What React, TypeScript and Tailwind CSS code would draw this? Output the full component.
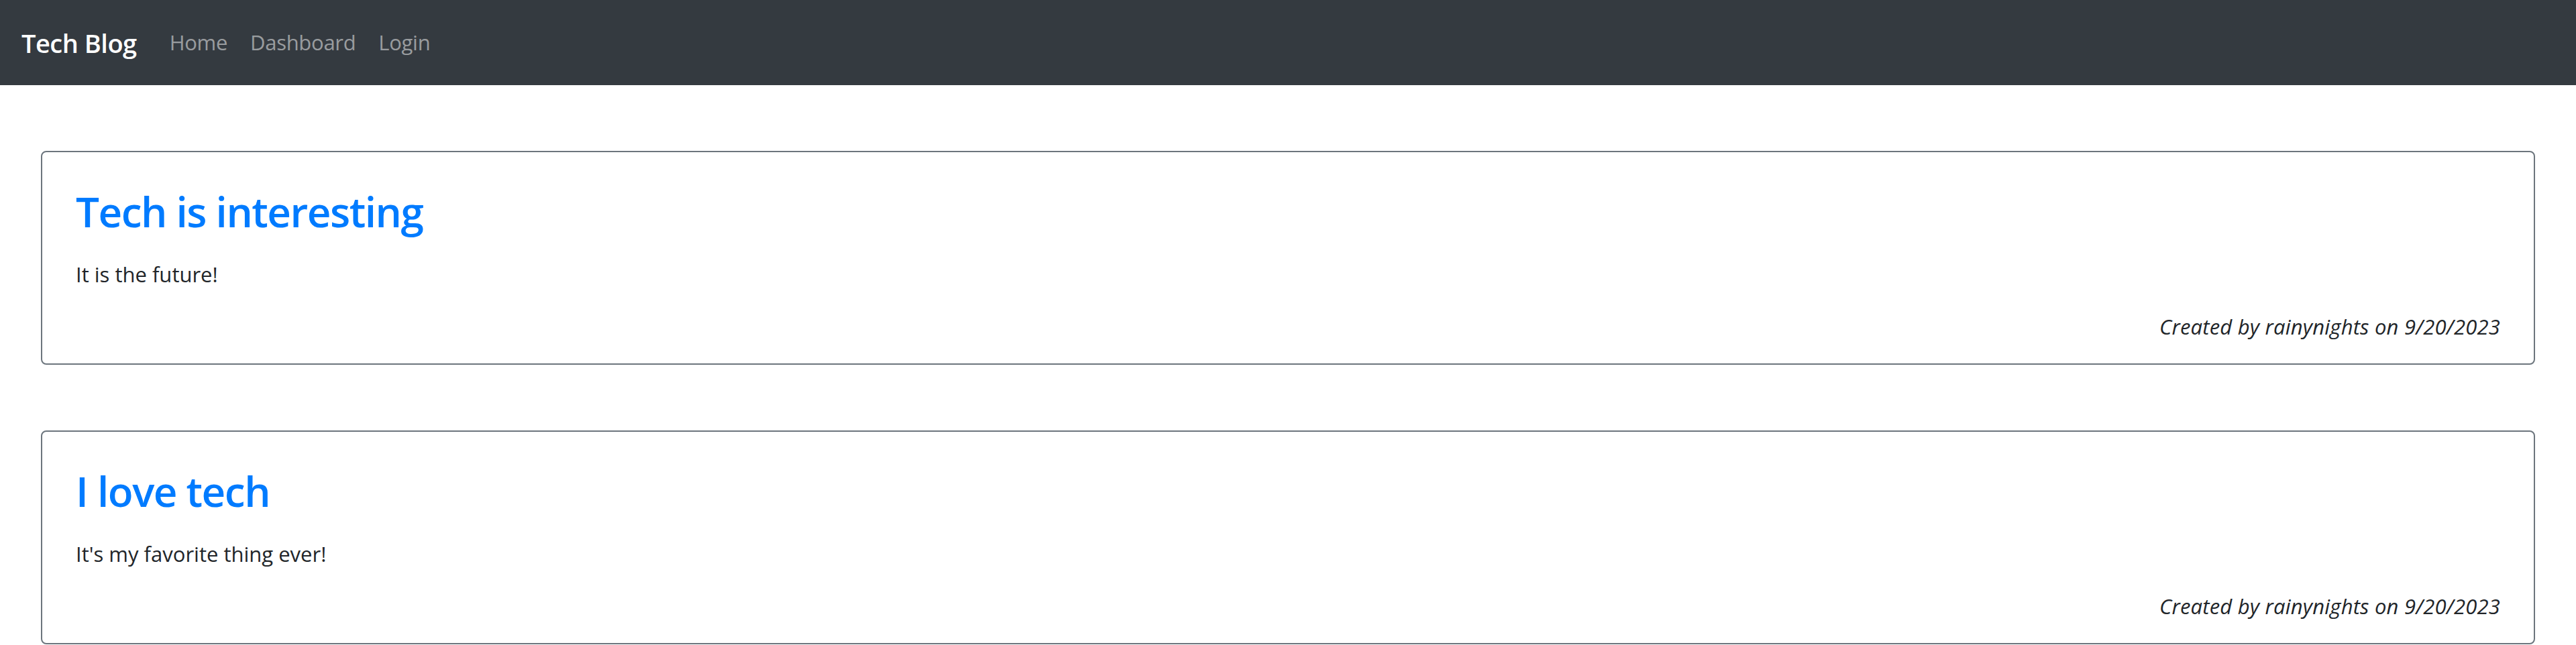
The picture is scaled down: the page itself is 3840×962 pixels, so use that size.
const posts = [
  { title: "Tech is interesting", body: "It is the future!", author: "rainynights", date: "9/20/2023" },
  { title: "I love tech", body: "It's my favorite thing ever!", author: "rainynights", date: "9/20/2023" },
];

const App = () => {
  return (
    <div className="min-h-screen bg-white font-['Open_Sans',sans-serif] text-[#212529]">
      <nav className="h-[127px] bg-[#343a40] px-[32px] flex items-center">
        <a className="text-[38px] font-semibold text-white mr-[32px] leading-none tracking-[-0.5px]">Tech Blog</a>
        <div className="flex items-center">
          <a className="px-[17px] text-[31px] text-white/50 leading-none tracking-[-0.3px]">Home</a>
          <a className="px-[17px] text-[31px] text-white/50 leading-none tracking-[-0.3px]">Dashboard</a>
          <a className="px-[17px] text-[31px] text-white/50 leading-none tracking-[-0.3px]">Login</a>
        </div>
      </nav>

      <main className="px-[61px]">
        {posts.map((post) => (
          <div
            key={post.title}
            className="mt-[98px] border-2 border-[#6c757d] rounded-[8px] px-[50px] pt-[49px] pb-[30px]"
          >
            <h2 className="text-[62px] font-semibold leading-[79px] text-[#007bff] tracking-[-1.5px]">{post.title}</h2>
            <p className="mt-[29px] text-[31px] leading-[50px]">{post.body}</p>
            <p className="mt-[28px] text-[31px] leading-[50px] italic text-right tracking-[0.2px]">
              Created by {post.author} on {post.date}
            </p>
          </div>
        ))}
      </main>
    </div>
  );
};

export default App;
